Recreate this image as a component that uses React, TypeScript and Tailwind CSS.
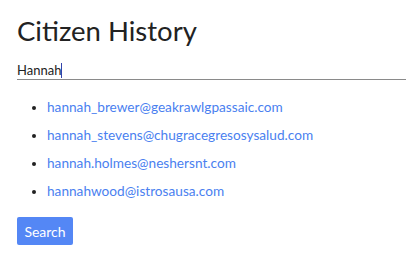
import React from "react";

const emails = [
  "hannah_brewer@geakrawlgpassaic.com",
  "hannah_stevens@chugracegresosysalud.com",
  "hannah.holmes@neshersnt.com",
  "hannahwood@istrosausa.com",
];

export default function App() {
  return (
    <div className="pl-[17px] pt-[14px] font-['Lato',sans-serif] text-[#222]">
      <h1 className="text-[27.5px] leading-[34px] font-normal">Citizen History</h1>
      <div className="mt-[13px] border-b border-[#8a8a8a] text-[13px] leading-[18px]">
        <span>Hannah</span>
        <span className="inline-block w-px h-[15px] bg-[#3344aa] align-[-3px]" />
      </div>
      <ul className="mt-[13px] list-disc pl-[30px] text-[13.65px] leading-[28px]">
        {emails.map((e) => (
          <li key={e}>
            <a href="#" className="text-[#4a7ff0]">{e}</a>
          </li>
        ))}
      </ul>
      <button
        type="button"
        className="mt-[12px] h-[28px] w-[56px] rounded-[2px] bg-[#5487f5] text-[14px] text-white"
      >
        Search
      </button>
    </div>
  );
}
